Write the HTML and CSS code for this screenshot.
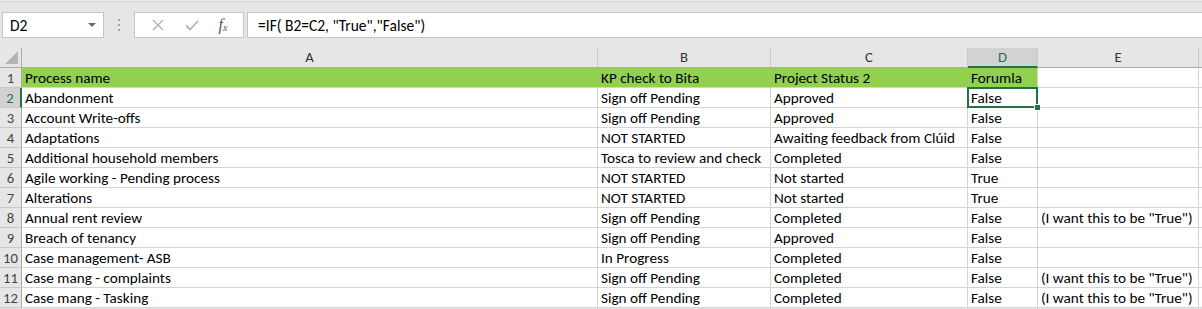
FILE: index.html
```html
<!DOCTYPE html>
<html lang="en">
<head>
<meta charset="UTF-8" />
<title>Sheet1</title>
<link rel="stylesheet" href="styles.css">
</head>
<body>

<div class="top-edge"></div>
<div class="formula-row">
  <div class="name-box">
    <span>D2</span>
    <span class="drop-arrow"></span>
  </div>
  <div class="grip">
    <span></span><span></span><span></span>
  </div>
  <div class="fx-box">
    <svg class="fx-icon" width="14" height="14" viewBox="0 0 14 14">
      <path d="M2 2 L12 12 M12 2 L2 12" stroke="#b3b3b3" stroke-width="1.4" fill="none" />
    </svg>
    <svg class="fx-icon" width="16" height="14" viewBox="0 0 16 14">
      <path d="M2 7.5 L6 11.5 L14 3" stroke="#b3b3b3" stroke-width="1.8" fill="none" />
    </svg>
    <span class="fx-label">f<sub>x</sub></span>
  </div>
  <div class="formula-input">=IF( B2=C2, "True","False")</div>
</div>

<div class="sheet">
  <div class="corner"><span class="corner-tri"></span></div>
  <div class="col-head">A</div>
  <div class="col-head">B</div>
  <div class="col-head">C</div>
  <div class="col-head selected">D</div>
  <div class="col-head">E</div>
  <div class="col-head"></div>

  <div class="row-head">1</div>
  <div class="cell head-fill">Process name</div>
  <div class="cell head-fill">KP check to Bita</div>
  <div class="cell head-fill">Project Status 2</div>
  <div class="cell head-fill last">Forumla</div>
  <div class="cell"></div>
  <div class="cell"></div>

  <div class="row-head selected">2</div>
  <div class="cell">Abandonment</div>
  <div class="cell">Sign off Pending</div>
  <div class="cell">Approved</div>
  <div class="cell active">False</div>
  <div class="cell"></div>
  <div class="cell"></div>

  <div class="row-head">3</div>
  <div class="cell">Account Write-offs</div>
  <div class="cell">Sign off Pending</div>
  <div class="cell">Approved</div>
  <div class="cell">False</div>
  <div class="cell"></div>
  <div class="cell"></div>

  <div class="row-head">4</div>
  <div class="cell">Adaptations</div>
  <div class="cell">NOT STARTED</div>
  <div class="cell">Awaiting feedback from Clúid</div>
  <div class="cell">False</div>
  <div class="cell"></div>
  <div class="cell"></div>

  <div class="row-head">5</div>
  <div class="cell">Additional household members</div>
  <div class="cell">Tosca to review and check</div>
  <div class="cell">Completed</div>
  <div class="cell">False</div>
  <div class="cell"></div>
  <div class="cell"></div>

  <div class="row-head">6</div>
  <div class="cell">Agile working - Pending process</div>
  <div class="cell">NOT STARTED</div>
  <div class="cell">Not started</div>
  <div class="cell">True</div>
  <div class="cell"></div>
  <div class="cell"></div>

  <div class="row-head">7</div>
  <div class="cell">Alterations</div>
  <div class="cell">NOT STARTED</div>
  <div class="cell">Not started</div>
  <div class="cell">True</div>
  <div class="cell"></div>
  <div class="cell"></div>

  <div class="row-head">8</div>
  <div class="cell">Annual rent review</div>
  <div class="cell">Sign off Pending</div>
  <div class="cell">Completed</div>
  <div class="cell">False</div>
  <div class="cell">(I want this to be "True")</div>
  <div class="cell"></div>

  <div class="row-head">9</div>
  <div class="cell">Breach of tenancy</div>
  <div class="cell">Sign off Pending</div>
  <div class="cell">Approved</div>
  <div class="cell">False</div>
  <div class="cell"></div>
  <div class="cell"></div>

  <div class="row-head">10</div>
  <div class="cell">Case management- ASB</div>
  <div class="cell">In Progress</div>
  <div class="cell">Completed</div>
  <div class="cell">False</div>
  <div class="cell"></div>
  <div class="cell"></div>

  <div class="row-head">11</div>
  <div class="cell">Case mang - complaints</div>
  <div class="cell">Sign off Pending</div>
  <div class="cell">Completed</div>
  <div class="cell">False</div>
  <div class="cell">(I want this to be "True")</div>
  <div class="cell"></div>

  <div class="row-head">12</div>
  <div class="cell">Case mang - Tasking</div>
  <div class="cell">Sign off Pending</div>
  <div class="cell">Completed</div>
  <div class="cell">False</div>
  <div class="cell">(I want this to be "True")</div>
  <div class="cell"></div>
</div>

</body>
</html>
```

FILE: styles.css
```css
body {
  margin: 0;
  background: #e6e6e6;
  font-family: Calibri, Carlito, Lato, 'Noto Sans', sans-serif;
  font-size: 15.2px;
  color: #000;
  overflow: hidden;
}

.top-edge {
  height: 1px;
  background: #ececec;
  border-bottom: 1px solid #d2d2d2;
}

/* name box + formula bar */
.formula-row {
  display: flex;
  align-items: stretch;
  height: 26px;
  padding: 10px 0 10px 2px;
}

.name-box {
  width: 102px;
  box-sizing: border-box;
  background: #fff;
  border: 1px solid #c6c6c6;
  display: flex;
  align-items: center;
  justify-content: space-between;
  padding: 0 7px 0 7px;
  font-size: 15.5px;
}

.drop-arrow {
  width: 0;
  height: 0;
  border-left: 4px solid transparent;
  border-right: 4px solid transparent;
  border-top: 4px solid #666;
}

.grip {
  width: 30px;
  display: flex;
  flex-direction: column;
  align-items: center;
  justify-content: center;
  gap: 3px;
}

.grip span {
  width: 2px;
  height: 2px;
  background: #a6a6a6;
}

.fx-box {
  width: 110px;
  box-sizing: border-box;
  background: #fff;
  border: 1px solid #c6c6c6;
  display: flex;
  align-items: center;
  justify-content: space-around;
  padding: 0 6px 0 6px;
}

.fx-label {
  font-family: 'Liberation Serif', serif;
  font-style: italic;
  font-size: 16px;
  color: #555;
}

.fx-label sub {
  font-size: 10px;
  vertical-align: baseline;
  position: relative;
  top: 1px;
}

.formula-input {
  flex: 1;
  margin-left: 3px;
  background: #fff;
  border: 1px solid #c6c6c6;
  border-right: none;
  display: flex;
  align-items: center;
  padding-left: 10px;
  font-size: 15.5px;
}

/* grid */
.sheet {
  display: grid;
  grid-template-columns: 22px 576px 173px 197px 70px 161px 1fr;
  grid-auto-rows: 20px;
  background: #fff;
}

.corner,
.col-head,
.row-head,
.cell {
  box-sizing: border-box;
  white-space: nowrap;
  overflow: hidden;
}

.corner {
  background: #e6e6e6;
  border-right: 1px solid #ababab;
  border-bottom: 1px solid #ababab;
  position: relative;
}

.corner-tri {
  position: absolute;
  right: 3px;
  bottom: 3px;
  width: 0;
  height: 0;
  border-left: 13px solid transparent;
  border-bottom: 13px solid #b4b4b4;
}

.col-head {
  background: #e6e6e6;
  border-right: 1px solid #c8c8c8;
  border-bottom: 1px solid #ababab;
  text-align: center;
  line-height: 19px;
  color: #333;
  font-size: 14.67px;
}

.col-head.selected {
  background: #d2d2d2;
  color: #217346;
  border-bottom: 2px solid #217346;
}

.row-head {
  background: #e6e6e6;
  border-right: 1px solid #ababab;
  border-bottom: 1px solid #c8c8c8;
  text-align: center;
  line-height: 20px;
  color: #444;
  font-size: 14.67px;
}

.row-head.selected {
  background: #d2d2d2;
  color: #217346;
  border-right: 2px solid #217346;
}

.cell {
  border-right: 1px solid #d4d4d4;
  border-bottom: 1px solid #d4d4d4;
  padding-left: 3px;
  line-height: 20px;
}

.head-fill {
  background: #92d050;
  border-right-color: #92d050;
}

.head-fill.last {
  border-right-color: #d4d4d4;
}

.active {
  position: relative;
  overflow: visible;
}

.active::after {
  content: "";
  position: absolute;
  left: -1px;
  top: -1px;
  right: -1px;
  bottom: -1px;
  border: 2px solid #217346;
}

.active::before {
  content: "";
  position: absolute;
  right: -4px;
  bottom: -4px;
  width: 5px;
  height: 5px;
  background: #217346;
  border: 1px solid #fff;
  z-index: 1;
}
```
